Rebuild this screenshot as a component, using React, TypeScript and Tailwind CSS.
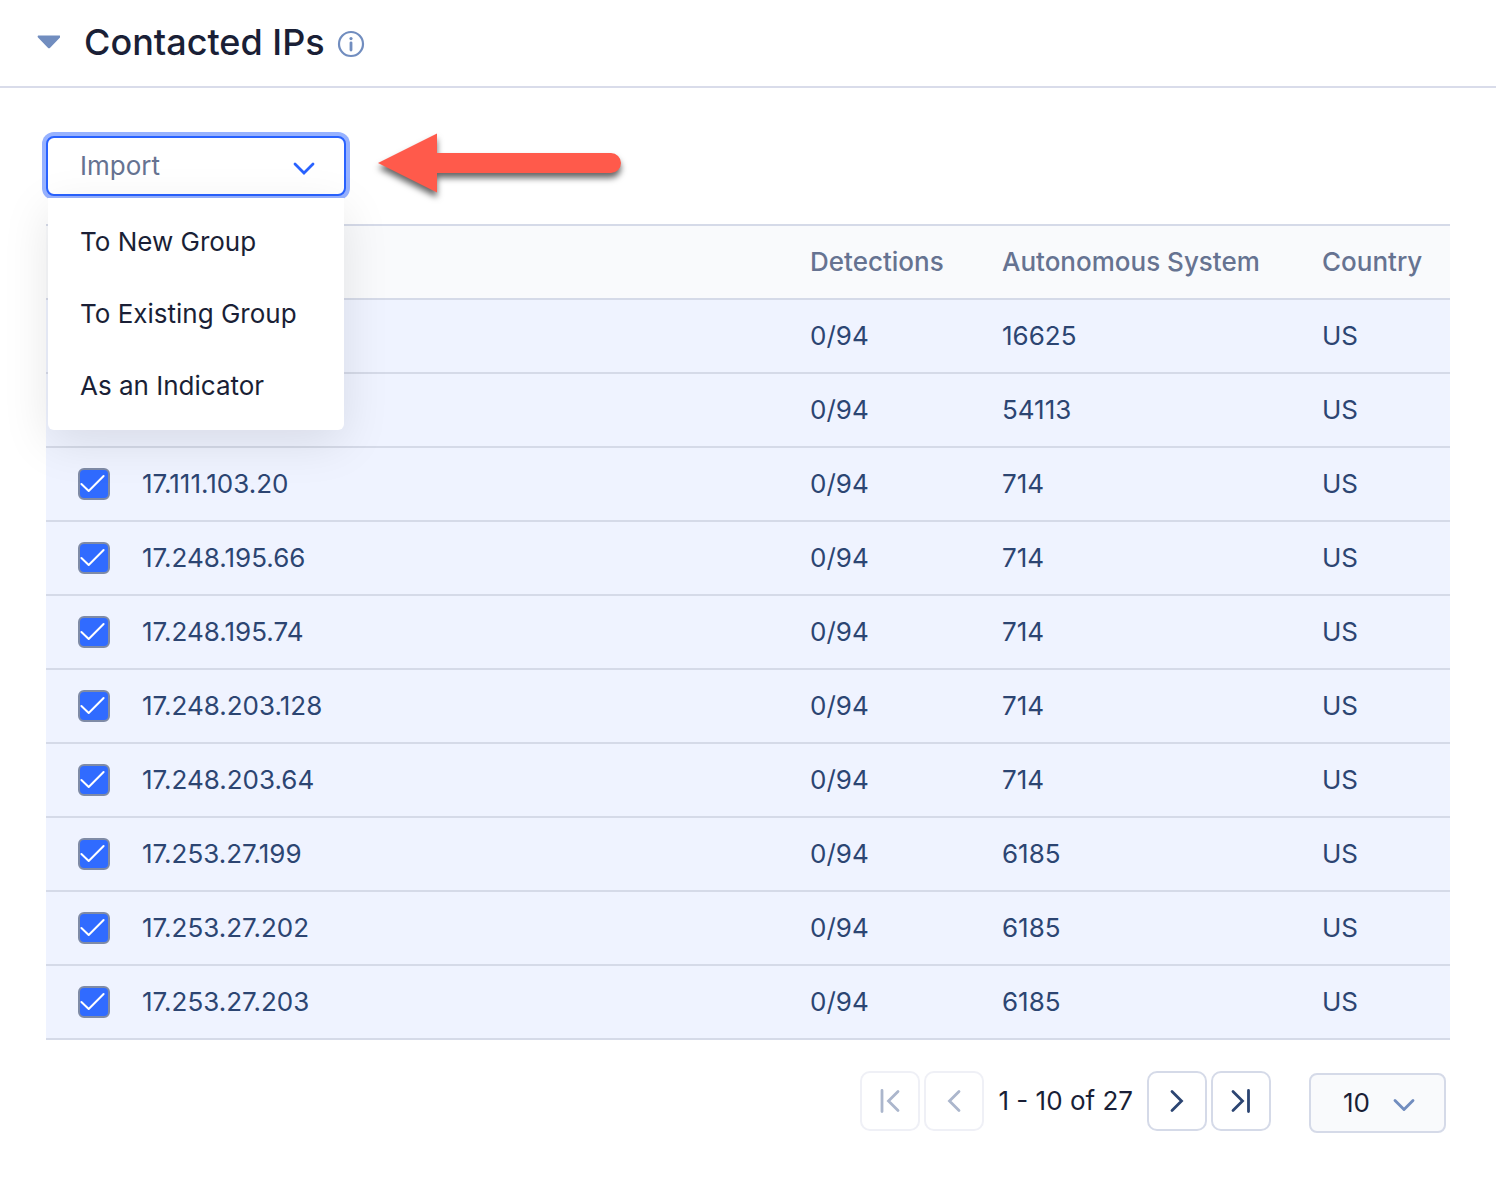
import { useState } from "react";
import { ChevronDown } from "lucide-react";

const rows = [
  { ip: "", detections: "0/94", asn: "16625", country: "US" },
  { ip: "", detections: "0/94", asn: "54113", country: "US" },
  { ip: "17.111.103.20", detections: "0/94", asn: "714", country: "US" },
  { ip: "17.248.195.66", detections: "0/94", asn: "714", country: "US" },
  { ip: "17.248.195.74", detections: "0/94", asn: "714", country: "US" },
  { ip: "17.248.203.128", detections: "0/94", asn: "714", country: "US" },
  { ip: "17.248.203.64", detections: "0/94", asn: "714", country: "US" },
  { ip: "17.253.27.199", detections: "0/94", asn: "6185", country: "US" },
  { ip: "17.253.27.202", detections: "0/94", asn: "6185", country: "US" },
  { ip: "17.253.27.203", detections: "0/94", asn: "6185", country: "US" },
];

const menuItems = ["To New Group", "To Existing Group", "As an Indicator"];

const SectionHeader = () => (
  <header className="flex items-center border-b-2 border-[#d9dcea] pl-9 pt-4.5 pb-5">
    <button type="button" aria-label="Collapse section" className="mr-6">
      <svg width="24" height="14" viewBox="0 0 24 14" className="block">
        <path
          d="M2.8 0.4H23.2C24.3 0.4 24.8 1.7 24 2.5L13.9 12.9C13.4 13.4 12.6 13.4 12.1 12.9L2 2.5C1.2 1.7 1.7 0.4 2.8 0.4Z"
          fill="#718dbf"
        />
      </svg>
    </button>
    <h1 className="text-[36px] leading-[48px] font-medium">Contacted IPs</h1>
    <svg width="28" height="28" viewBox="0 0 28 28" fill="none" className="ml-3 mt-1">
      <circle cx="14" cy="14" r="12" stroke="#718dbf" strokeWidth="2.2" />
      <path d="M14 12.8V20" stroke="#718dbf" strokeWidth="2.8" strokeLinecap="round" />
      <circle cx="14" cy="8.6" r="1.6" fill="#718dbf" />
    </svg>
  </header>
);

const ImportMenu = () => {
  const [open, setOpen] = useState(true);

  return (
    <div className="relative w-[300px]">
      <button
        type="button"
        aria-haspopup="menu"
        aria-expanded={open}
        onClick={() => setOpen(!open)}
        className="flex h-[60px] w-full items-center justify-between rounded-lg border-2 border-[#2962ff] bg-white pl-8 pr-7 text-[#667391] ring-4 ring-[#97b2ff]"
      >
        Import
        <svg width="24" height="24" viewBox="0 0 24 24" fill="none" className="mt-1">
          <path
            d="M3 8L12 17L21 8"
            stroke="#2962ff"
            strokeWidth="2.8"
            strokeLinecap="round"
          />
        </svg>
      </button>
      {open && (
        <ul
          role="menu"
          className="absolute top-[62px] inset-x-0.5 z-10 rounded-b-md bg-white py-2 shadow-[0_12px_48px_rgba(0,0,0,0.1)]"
        >
          {menuItems.map((item) => (
            <li key={item} role="none">
              <button
                type="button"
                role="menuitem"
                className="h-[72px] w-full px-8 text-left whitespace-nowrap"
              >
                {item}
              </button>
            </li>
          ))}
        </ul>
      )}
    </div>
  );
};

const Arrow = () => (
  <svg
    width="244"
    height="60"
    viewBox="0 0 244 60"
    fill="#ff5a4b"
    className="overflow-visible drop-shadow-[0_5px_3px_rgba(0,0,0,0.6)]"
  >
    <path d="M0 27L59 -2.5V17H233A10 10 0 0 1 233 37H59V56.5Z" />
  </svg>
);

const RowCheckbox = ({ label }: { label: string }) => (
  <span className="relative block size-8">
    <input
      type="checkbox"
      defaultChecked
      aria-label={label}
      className="peer block size-8 appearance-none rounded-md border-2 border-[#7f8ba6] bg-white checked:bg-[#306bff]"
    />
    <svg
      viewBox="0 0 32 32"
      fill="none"
      className="pointer-events-none absolute inset-0 hidden peer-checked:block"
    >
      <path
        d="M3.4 16L10.7 23L25.6 8"
        stroke="#fff"
        strokeWidth="2"
        strokeLinecap="round"
        strokeLinejoin="round"
      />
    </svg>
  </span>
);

const IpTable = () => (
  <table className="w-full table-fixed border-separate border-spacing-0 text-left">
    <colgroup>
      <col className="w-24" />
      <col />
      <col className="w-[192px]" />
      <col className="w-[320px]" />
      <col className="w-32" />
    </colgroup>
    <thead className="bg-[#f9fafc] text-[#667391]">
      <tr className="h-[76px]">
        <td className="border-y-2 border-[#d5dae8]" />
        <td className="border-y-2 border-[#d5dae8]" />
        <th className="border-y-2 border-[#d5dae8] font-medium">Detections</th>
        <th className="border-y-2 border-[#d5dae8] font-medium">Autonomous System</th>
        <th className="border-y-2 border-[#d5dae8] font-medium">Country</th>
      </tr>
    </thead>
    <tbody className="bg-[#eff3ff] text-[#2c4572]">
      {rows.map((row, index) => (
        <tr key={index} className="h-[74px]">
          <td className="border-b-2 border-[#d5dae8] pl-8">
            <RowCheckbox label={row.ip} />
          </td>
          <td className="border-b-2 border-[#d5dae8]">{row.ip}</td>
          <td className="border-b-2 border-[#d5dae8]">{row.detections}</td>
          <td className="border-b-2 border-[#d5dae8]">{row.asn}</td>
          <td className="border-b-2 border-[#d5dae8]">{row.country}</td>
        </tr>
      ))}
    </tbody>
  </table>
);

type PageButtonProps = { label: string; d: string; disabled?: boolean };

const PageButton = ({ label, d, disabled }: PageButtonProps) => (
  <button
    type="button"
    aria-label={label}
    disabled={disabled}
    className="flex size-[60px] items-center justify-center rounded-[10px] border-2 border-[#d5dae8] text-[#2c4572] disabled:border-[#eff0f6] disabled:text-[#abb6cc]"
  >
    <svg width="28" height="28" viewBox="0 0 28 28" fill="none">
      <path d={d} stroke="currentColor" strokeWidth="2.8" strokeLinecap="round" />
    </svg>
  </button>
);

const Pagination = () => (
  <nav className="flex items-start justify-end pt-[31px] pr-1" aria-label="Pagination">
    <div className="flex items-center gap-1">
      <PageButton label="First page" d="M6 3.5V24.5M22 4.5L12.5 14L22 23.5" disabled />
      <PageButton label="Previous page" d="M19 4.5L9.5 14L19 23.5" disabled />
      <span className="px-2.5">1 - 10 of 27</span>
      <PageButton label="Next page" d="M9 4.5L18.5 14L9 23.5" />
      <PageButton label="Last page" d="M6 4.5L15.5 14L6 23.5M21.5 3.5V24.5" />
    </div>
    <div className="relative ml-[38px] mt-0.5">
      <select
        aria-label="Rows per page"
        defaultValue="10"
        className="block h-[60px] w-[137px] appearance-none rounded-lg border-2 border-[#d5dae8] bg-[#f9fafc] pl-8"
      >
        <option value="10">10</option>
      </select>
      <ChevronDown
        size={36}
        strokeWidth={1.9}
        className="pointer-events-none absolute right-6 top-3.5 text-[#718dbf]"
      />
    </div>
  </nav>
);

const App = () => {
  return (
    <div className="bg-white font-['Inter',sans-serif] text-[26px] leading-8 text-[#1a1f36]">
      <SectionHeader />
      <main className="px-[46px] pt-12 pb-16">
        <div className="mb-7 flex gap-8">
          <ImportMenu />
          <Arrow />
        </div>
        <IpTable />
        <Pagination />
      </main>
    </div>
  );
};

export default App;
